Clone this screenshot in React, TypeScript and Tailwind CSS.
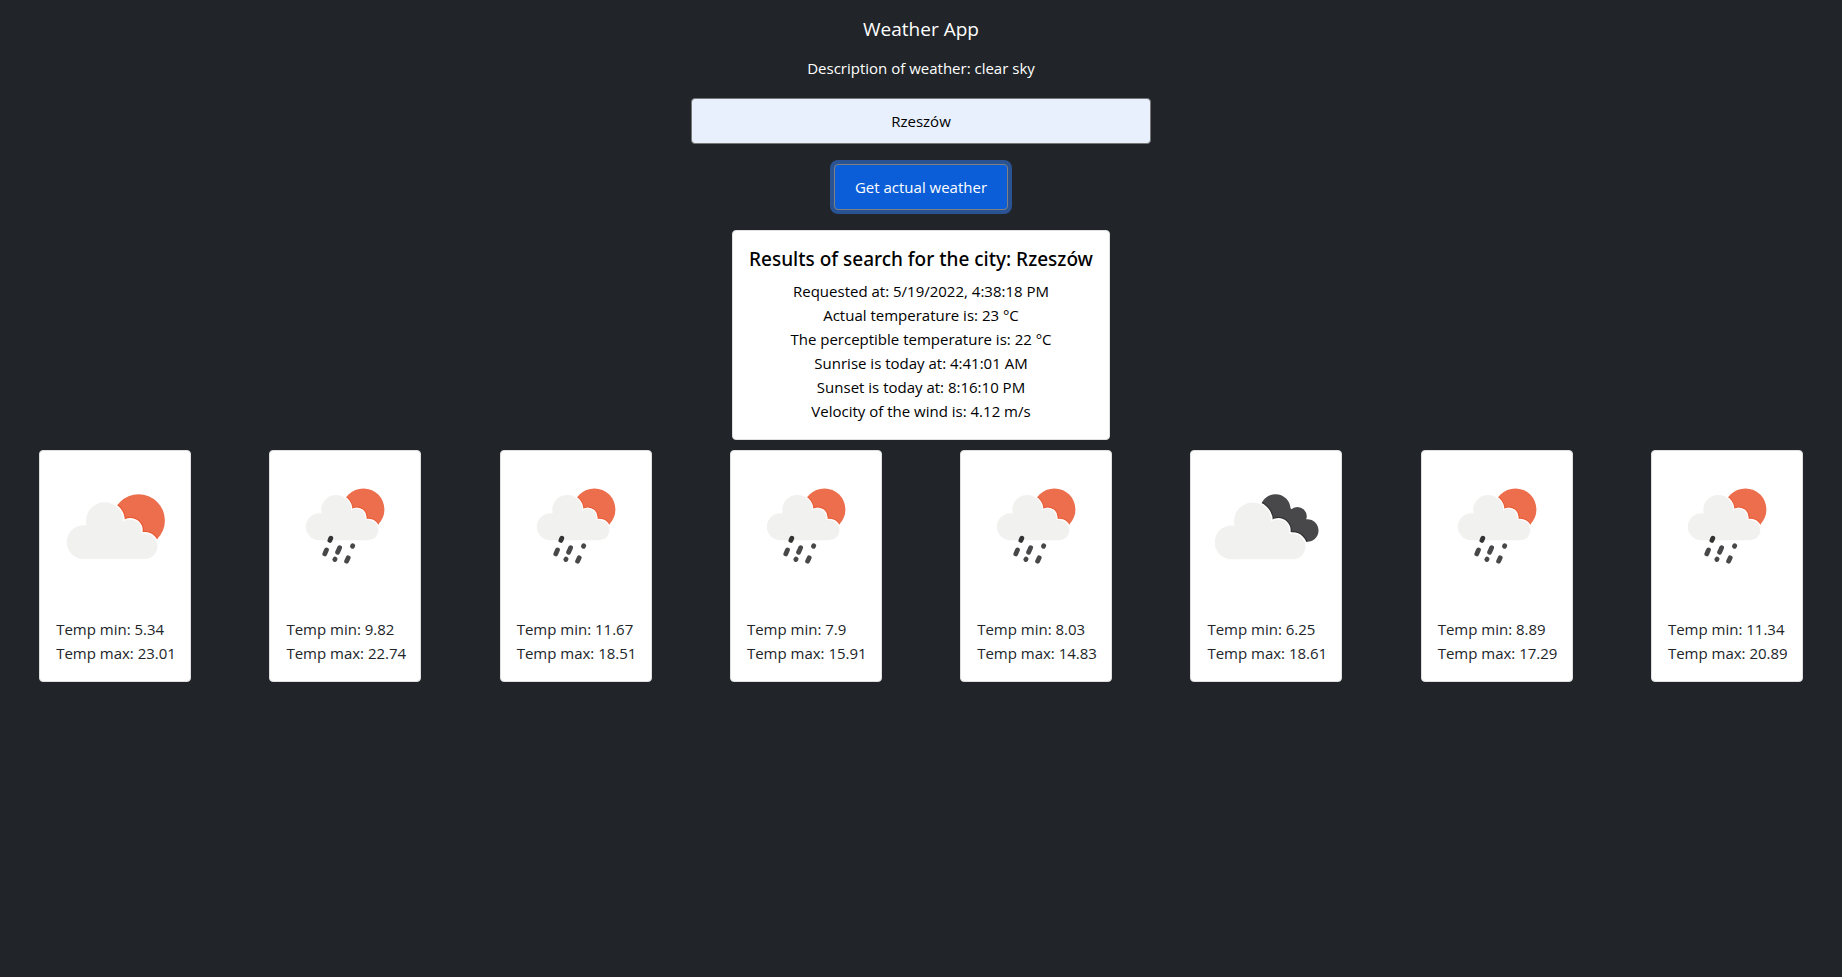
import { useState } from "react";

type Kind = "partly" | "rain" | "broken";

interface Day {
  kind: Kind;
  min: number;
  max: number;
}

const days: Day[] = [
  { kind: "partly", min: 5.34, max: 23.01 },
  { kind: "rain", min: 9.82, max: 22.74 },
  { kind: "rain", min: 11.67, max: 18.51 },
  { kind: "rain", min: 7.9, max: 15.91 },
  { kind: "rain", min: 8.03, max: 14.83 },
  { kind: "broken", min: 6.25, max: 18.61 },
  { kind: "rain", min: 8.89, max: 17.29 },
  { kind: "rain", min: 11.34, max: 20.89 },
];

const results = [
  "Requested at: 5/19/2022, 4:38:18 PM",
  "Actual temperature is: 23 °C",
  "The perceptible temperature is: 22 °C",
  "Sunrise is today at: 4:41:01 AM",
  "Sunset is today at: 8:16:10 PM",
  "Velocity of the wind is: 4.12 m/s",
];

function CloudShape() {
  return (
    <>
      <circle cx="64.7" cy="70" r="18.7" />
      <circle cx="43.6" cy="91.1" r="16.9" />
      <circle cx="90.2" cy="79.4" r="11" />
      <circle cx="104.7" cy="95.3" r="12.7" />
      <path d="M43.6 108H104.7V84L90 75 64 70 44 80Z" />
    </>
  );
}

function Cloud({ shade, clip }: { shade: string; clip: string }) {
  return (
    <>
      <g clipPath={`url(#${clip})`}>
        <g fill={shade} stroke={shade} strokeWidth="5.5">
          <CloudShape />
        </g>
      </g>
      <g fill="#fff" stroke="#fff" strokeWidth="3">
        <CloudShape />
      </g>
      <g fill="#f1f1f0">
        <CloudShape />
      </g>
    </>
  );
}

function DarkLobes() {
  return (
    <>
      <circle cx="87.5" cy="58" r="15" />
      <circle cx="109.4" cy="65.2" r="9.4" />
      <circle cx="119.2" cy="79.3" r="11.3" />
      <path d="M87.4 57.8L101.4 56 109.4 63.8 121.4 77.8 119 90.4 99.4 83.8Z" />
    </>
  );
}

function WeatherIcon({ kind, id }: { kind: Kind; id: string }) {
  if (kind === "broken") {
    return (
      <svg viewBox="0 0 150 150" className="block w-full" role="img" aria-label="Broken clouds">
        <g transform="translate(-3 .2)">
          <clipPath id={id}>
            <DarkLobes />
          </clipPath>
          <g fill="#48484a">
            <DarkLobes />
          </g>
          <Cloud shade="#333334" clip={id} />
        </g>
      </svg>
    );
  }
  const rain = kind === "rain";
  return (
    <svg
      viewBox="0 0 150 150"
      className="block w-full"
      role="img"
      aria-label={rain ? "Rain" : "Few clouds"}
    >
      <g transform={rain ? "translate(14.5 2.9) scale(.8)" : undefined}>
        <clipPath id={id}>
          <circle cx="98.6" cy="69.5" r="26.3" />
        </clipPath>
        <circle cx="98.6" cy="69.5" r="26.3" fill="#ec6e4c" />
        <Cloud shade="#ea5a35" clip={id} />
      </g>
      {rain && (
        <g stroke="#48484a" strokeWidth="4.8" strokeLinecap="round">
          <path d="M59.9 89.4L60.8 87.3" stroke="#333334" />
          <path d="M54.8 102.9L56.5 98.9" />
          <path d="M67.6 101.2L69.6 96.7" />
          <path d="M82.4 95.3L82.8 94.7" />
          <path d="M64.8 108.5L65.1 108.1" />
          <path d="M76.6 110.2L78.2 106.8" />
        </g>
      )}
    </svg>
  );
}

export default function App() {
  const [city, setCity] = useState("Rzeszów");

  return (
    <main className="flex min-h-screen flex-col items-center bg-[#212529] pt-[17px] font-['Open_Sans','Noto_Sans',sans-serif] text-[15px] leading-6 text-[#212529]">
      <h1 className="text-[19px] text-white">Weather App</h1>
      <p className="mt-[15px] text-white">Description of weather: clear sky</p>

      <form
        className="mt-[18px] flex w-full flex-col items-center gap-5"
        onSubmit={(e) => e.preventDefault()}
      >
        <input
          aria-label="City"
          value={city}
          onChange={(e) => setCity(e.target.value)}
          className="h-[46px] w-1/4 rounded border border-[#767676] bg-[#e8f0fe] px-3 text-center text-black outline-none"
        />
        <button
          type="submit"
          className="h-[46px] rounded border border-[#808080] bg-[#0b5ed7] px-5 text-white ring-4 ring-[#295393]"
        >
          Get actual weather
        </button>
      </form>

      <section className="mt-5 min-w-[378px] rounded border border-[#dfdfdf] bg-white p-4 text-center text-black">
        <h2 className="mb-2 font-['Noto_Sans',sans-serif] text-[19px] font-medium leading-6">
          Results of search for the city: Rzeszów
        </h2>
        {results.map((line) => (
          <p key={line}>{line}</p>
        ))}
      </section>

      <ul className="mt-[10px] grid w-full grid-cols-8 justify-items-center">
        {days.map((day, i) => (
          <li
            key={i}
            className="w-38 overflow-hidden rounded border border-[#dfdfdf] bg-white"
          >
            <WeatherIcon kind={day.kind} id={`sky-${i}`} />
            <div className="whitespace-nowrap p-4">
              <p>Temp min: {day.min}</p>
              <p>Temp max: {day.max}</p>
            </div>
          </li>
        ))}
      </ul>
    </main>
  );
}
